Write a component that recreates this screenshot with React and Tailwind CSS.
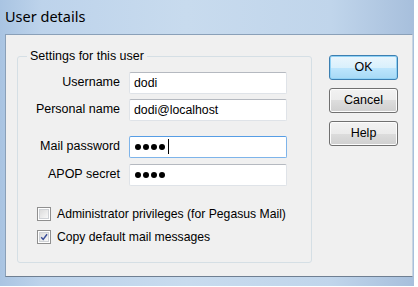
function TextBox({ value, password, focused }) {
  return (
    <div
      className={
        'ml-[9px] flex h-[22px] w-[158px] items-center rounded-[2px] border bg-white pl-[4px] ' +
        (focused
          ? 'border-[#7eb4ea] border-t-[#569de5]'
          : 'border-[#dfe3e8] border-t-[#b5b9c0]')
      }
    >
      {password ? (
        <span className="flex items-center gap-[2px] pl-[1px]">
          {[0, 1, 2, 3].map((i) => (
            <span key={i} className="h-[6px] w-[6px] rounded-full bg-black" />
          ))}
          {focused && <span className="ml-[1px] h-[15px] w-[1px] bg-black" />}
        </span>
      ) : (
        <span className="text-[12.3px] text-black">{value}</span>
      )}
    </div>
  );
}

function Field({ label, className, ...rest }) {
  return (
    <div className={'flex items-center ' + className}>
      <span className="w-[102px] text-right text-[12.5px] text-black">{label}</span>
      <TextBox {...rest} />
    </div>
  );
}

function CheckBox({ label, checked, className }) {
  return (
    <label className={'flex h-[17px] items-center gap-[6px] pl-[19px] ' + className}>
      <span className="flex h-[14px] w-[14px] items-center justify-center border border-[#8f8f8f] bg-white">
        <span className="flex h-[10px] w-[10px] items-center justify-center border border-[#cfd2d6] bg-gradient-to-br from-[#dcdcdc] to-[#f8f8f8]">
          {checked && (
            <svg width="10" height="10" viewBox="0 0 10 10">
              <path d="M1.5 5.2 L4 8 L8.8 1.5" fill="none" stroke="#3b4f99" strokeWidth="1.8" />
            </svg>
          )}
        </span>
      </span>
      <span className="text-[12.2px] text-black">{label}</span>
    </label>
  );
}

function Button({ children, primary }) {
  return (
    <button
      className={
        'h-[25px] w-[69px] rounded-[3px] border text-[12.5px] text-black ' +
        (primary
          ? 'border-[#3c7fb1] bg-[linear-gradient(#eaf6fd_0%,#d9f0fc_50%,#bee6fd_50%,#a7d9f5_100%)] shadow-[inset_0_0_0_1px_#8fd1f5]'
          : 'border-[#707070] bg-[linear-gradient(#f2f2f2_0%,#ebebeb_50%,#dddddd_50%,#cfcfcf_100%)] shadow-[inset_0_0_0_1px_#fcfcfc]')
      }
    >
      {children}
    </button>
  );
}

export default function App() {
  return (
    <div className="h-[287px] w-[418px] overflow-hidden bg-white font-['Liberation_Sans',Arial,sans-serif]">
      <div className="flex h-[286px] w-[414px] flex-col bg-[linear-gradient(90deg,#a9c4e2_0%,#bdd3eb_10%,#c8dbee_45%,#c0d5eb_80%,#a7bfdc_100%)]">
        <div className="flex h-[34px] items-center pl-[5px] pb-[1px]">
          <span className="font-['Noto_Sans',sans-serif] text-[14.5px] text-black">User details</span>
        </div>

        <div className="ml-[5px] mr-[1px] flex h-[243px] border border-b-[#6f7f92] border-l-[#8aa0b8] border-t-[#8aa0b8] border-r-[#c9d4e0] bg-[#f0f0f0] pl-[11px] pt-[12px]">
          <fieldset className="h-[216px] w-[295px] rounded-[3px] border border-[#d5dfe5]">
            <legend className="ml-[9px] px-[3px] text-[12.5px] text-black">Settings for this user</legend>
            <Field label="Username" value="dodi" className="mt-[6px]" />
            <Field label="Personal name" value="dodi@localhost" className="mt-[5px]" />
            <Field label="Mail password" password focused className="mt-[15px]" />
            <Field label="APOP secret" password className="mt-[6px]" />
            <CheckBox label="Administrator privileges (for Pegasus Mail)" className="mt-[20px]" />
            <CheckBox label="Copy default mail messages" checked className="mt-[6px]" />
          </fieldset>

          <div className="ml-[17px] mt-[8px] flex flex-col gap-[8px]">
            <Button primary>OK</Button>
            <Button>Cancel</Button>
            <Button>Help</Button>
          </div>
        </div>
      </div>
    </div>
  );
}
